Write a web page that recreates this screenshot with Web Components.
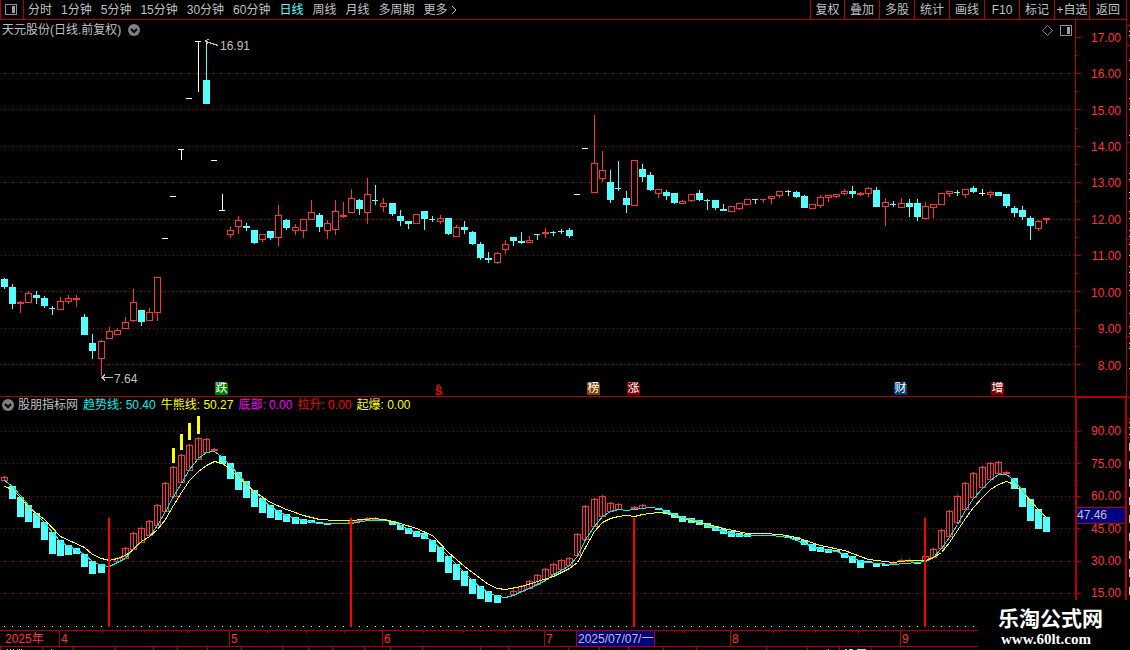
<!DOCTYPE html>
<html lang="zh-CN">
<head>
<meta charset="utf-8">
<meta name="viewport" content="width=device-width, initial-scale=1">
<title>天元股份 日线</title>
<style>
html { height: 100%; background: #000; }
body {
  margin: 0; height: 100%; overflow: hidden; background: #000; color: #c0c0c0;
  font: 12px/16px "Liberation Sans", "Noto Sans CJK SC", sans-serif;
  --rule: #b00000; --up: #ff3232; --down: #54ffff; --mark: #000080;
}
</style>
</head>
<body>
<stock-terminal></stock-terminal>
<script>
const RULE = '#b00000', UP = '#ff3232', DOWN = '#54ffff';
const rect = (x, y, w, h, c) => `<rect x="${x}" y="${y}" width="${w}" height="${h}" fill="${c}"/>`;
const barX = i => 4 + 8 * i + Math.floor((i + 0.65) / 12.15);
const box = (x, t, b, c, inner) => {
  if (b - t < 3) return rect(x - 3, t, 7, b - t, c);
  return (inner ? rect(x - 2, t + 1, 5, b - t - 2, inner) : '') +
    rect(x - 3, t, 7, 1, c) + rect(x - 3, b - 1, 7, 1, c) + rect(x - 3, t, 1, b - t, c) + rect(x + 3, t, 1, b - t, c);
};
const grid = (rows, w) => rows.map(y =>
  `<line x1="1" x2="${w}" y1="${y + 0.5}" y2="${y + 0.5}" stroke="${RULE}" stroke-dasharray="1 3"/>`).join('');
const svg = (x, y, w, h, inner) =>
  `<svg viewBox="${x} ${y} ${w} ${h}" preserveAspectRatio="none" shape-rendering="crispEdges" aria-hidden="true">${inner}</svg>`;
const define = (name, render) => customElements.define(name, class extends HTMLElement {
  constructor() { super(); this.attachShadow({ mode: 'open' }); }
  connectedCallback() { this.shadowRoot.innerHTML = render(this); }
});
const layer = 'svg{position:absolute;inset:0;width:100%;height:100%;display:block}';

/* kind, body top, body bottom, high, low; d = down, u = up, f = flat up, w = unchanged */
const candles = `d279 287 278 289|d287 304 284 309|f302 304 301 313|u293 303 291 303|d295 298 291 304|d298 306 296 308|d308 309 306 315|u301 310 297 310|u298 302 295 304|f298 300 295 307|d317 335 314 335|d343 351 334 359|u341 359 340 376|u331 339 327 339|u330 335 328 335|u322 329 317 329|u302 321 289 322|d310 322 310 326|u312 321 308 321|u277 313 277 321|w238 239 238 239|w196 197 196 197|w149 150 149 160|w98 99 98 99|w41 42 41 92|d80 104 40 104|w160 161 160 161|w210 211 194 211|u230 235 227 238|u220 227 216 234|d226 228 223 231|d230 243 230 244|u234 240 234 242|d231 238 231 240|u215 238 205 246|d220 228 219 230|u227 231 224 235|u219 231 219 238|u212 220 200 220|d215 227 213 232|u223 231 220 239|u211 230 200 235|f215 217 202 218|u198 213 189 213|d200 209 199 215|u194 213 178 224|d200 201 185 205|u203 207 198 212|d203 214 203 216|d216 221 210 226|d221 224 221 229|u214 224 214 224|d211 219 211 230|d219 220 216 222|u218 222 215 224|d218 234 218 235|u227 237 225 237|d227 230 221 234|d232 244 231 245|d244 258 242 260|d258 260 252 263|u253 263 252 264|u244 250 240 254|d237 241 237 246|d241 243 232 244|u240 243 236 243|d234 235 234 240|f232 234 228 238|d232 233 231 236|d231 232 229 234|d230 236 228 238|w194 195 194 195|w148 149 148 149|u163 193 115 193|u170 179 151 182|d182 200 170 203|d188 189 161 191|d198 205 191 213|u160 206 160 206|d169 177 164 182|d175 190 172 191|u189 194 189 198|d192 196 190 200|d193 203 193 204|u201 204 200 204|u194 201 194 202|d193 200 190 201|d200 201 199 210|d200 208 200 210|d209 211 204 211|u206 212 206 212|u203 209 203 210|u199 205 199 205|d199 200 199 204|f199 200 199 203|u196 199 196 204|u191 196 191 198|d191 192 190 196|d192 197 191 198|d196 208 195 208|u204 209 204 209|u197 206 195 208|u195 198 195 202|u194 197 194 198|u191 194 189 195|d191 194 186 198|f193 195 192 196|u188 194 187 197|d190 207 187 207|u202 207 198 226|d204 205 201 207|u203 208 198 208|d203 207 199 217|d203 217 199 221|u206 219 202 219|u204 208 204 218|u193 205 193 205|u191 194 191 197|d192 193 190 196|u189 195 189 198|d188 192 186 193|w193 194 189 196|u192 195 191 198|d192 196 192 196|d194 206 194 208|d208 213 206 217|d210 217 206 220|d218 226 216 240|u221 229 220 231|f218 220 218 224`;
const drawCandles = () => candles.split('|').map((s, i) => {
  const k = s[0], [t, b, hi, lo] = s.slice(1).split(' ').map(Number), x = barX(i);
  const c = k === 'd' ? DOWN : k === 'w' ? '#fff' : UP;
  const wick = rect(x, hi, 1, lo - hi, c);
  if (k === 'u') return wick + box(x, t, b, c, '#000');
  const w = b - t === 1 ? 6 : 7;
  return wick + rect(x - 3, t, w, b - t, c);
}).join('');

/* bar index, top, bottom of each momentum block */
const downBlocks = '1 486 499,2 497 517,3 505 522,4 513 528,5 522 540,6 532 554,7 540 556,8 545 555,9 548 554,10 554 567,11 561 574,12 564 573,27 456 464,28 463 479,29 472 490,30 481 498,31 490 507,32 498 513,33 505 518,34 510 520,35 514 522,36 517 524,37 519 524,38 520 523,39 522 524,40 523 525,47 519 521,48 521 525,49 525 530,50 528 534,51 531 537,52 533 539,53 540 552,54 547 562,55 556 573,56 564 580,57 571 586,58 579 594,59 586 599,60 591 602,61 595 603,81 508 510,82 510 514,83 513 518,84 516 522,85 518 523,86 520 525,87 523 528,88 526 531,89 529 534,90 531 537,91 533 537,92 534 537,97 536 538,98 537 540,99 540 545,100 544 551,101 547 552,102 549 553,103 550 552,104 553 558,105 556 563,106 560 568,107 561 563,108 563 567,109 564 566,113 562 564,125 478 489,126 488 507,127 499 521,128 509 529,129 517 532';
const upBlocks = '0 477 481,14 558 562,15 548 559,16 533 550,17 528 543,18 521 536,19 505 526,20 483 512,21 467 497,22 455 483,23 445 471,24 438 460,25 439 453,26 449 451,43 520 523,44 520 522,45 518 520,46 518 520,63 591 595,64 586 592,65 581 589,66 575 585,67 569 580,68 564 575,69 560 570,70 558 566,71 534 556,72 506 540,73 499 527,74 496 517,75 503 512,76 504 510,78 507 509,79 505 509,110 562 564,111 560 562,112 560 562,114 556 561,115 549 558,116 530 549,117 511 537,118 496 523,119 483 510,120 473 498,121 467 488,122 463 480,123 462 474,124 472 474';
const trend = '4,480 12,486 20,495 28,505 36,514 44,522 52,532 60,541 68,546 76,549 84,554 92,561 101,565 109,566 117,562 125,558 133,548 141,541 149,536 157,525 165,511 173,496 181,483 189,469 198,458 206,452 214,451 222,457 230,465 238,474 246,483 254,491 262,499 270,506 278,511 286,515 295,518 303,520 319,523 335,523 351,523 367,520 383,520 392,521 400,525 408,529 416,532 424,535 432,541 440,548 448,556 456,564 464,572 472,580 480,587 488,592 497,596 505,597 513,595 521,591 529,588 537,584 545,580 553,574 561,570 569,565 577,556 585,539 594,526 602,516 610,511 618,509 626,510 634,509 642,508 650,507 658,508 666,511 674,514 682,517 691,519 699,521 707,525 715,528 723,531 739,535 755,535 771,535 788,537 804,543 820,549 836,551 844,554 852,557 860,561 876,563 893,564 917,562 925,561 933,557 941,548 949,537 957,524 965,510 973,498 982,488 990,480 998,474 1006,474 1014,480 1022,490 1030,500 1038,509 1046,518';
const slow = '4,486 12,489 20,497 28,507 44,519 60,536 84,547 92,554 101,558 109,560 117,558 125,555 133,549 141,541 149,536 157,529 165,519 173,505 181,492 189,480 198,471 206,465 214,461 222,463 230,469 238,477 254,491 270,502 286,509 303,515 319,519 335,520 351,520 375,518 388,520 400,523 416,528 432,535 448,552 464,566 480,578 488,584 497,588 505,589 521,586 537,581 553,576 569,568 577,562 585,547 594,531 602,522 610,518 618,516 626,515 634,516 642,514 658,512 666,513 682,518 699,522 723,528 747,533 763,533 780,534 796,537 820,545 844,550 868,559 893,562 909,560 925,560 933,557 941,552 949,542 957,530 965,518 973,507 982,497 990,489 998,484 1006,481 1014,484 1022,492 1038,509 1046,517';
const curve = (pts, c) => `<polyline transform="translate(.5 .5)" fill="none" stroke="${c}" points="${pts}"/>`;
const drawMomentum = () => {
  const split = s => s.split(',').map(r => r.split(' ').map(Number));
  return split(downBlocks).map(([i, t, b]) => rect(barX(i) - 3, t, 7, b - t, DOWN)).join('') +
    split(upBlocks).map(([i, t, b]) => rect(barX(i), t - 1, 1, b - t + 1, UP) + box(barX(i), t, b, UP)).join('') +
    curve(trend, '#00f0f0') + curve(slow, '#ffff00') +
    [[21, 448, 463], [22, 434, 450], [23, 423, 440], [24, 416, 434]].map(([i, t, b]) => rect(barX(i) - 1, t, 3, b - t, '#ffff00')).join('') +
    Array.from({ length: 121 }, (_, i) => rect(barX(i), 626, 1, 1, '#ffff54')).join('') +
    [108, 350, 633, 924].map(x => rect(x, 518, 2, 109, '#ff0000')).join('');
};

define('chevron-disc', () => `<style>:host{display:block;width:12px;height:12px}svg{display:block}</style>
<svg width="12" height="12" viewBox="0 0 12 12" aria-hidden="true"><circle cx="6" cy="6" r="6" fill="#808080"/><path d="M3 5l3 3 3-3" fill="none" stroke="#000" stroke-width="2"/></svg>`);

define('pane-icon', () => `<style>:host{display:block;width:13px;height:11px}svg{display:block}</style>
<svg width="13" height="11" viewBox="0 0 13 11" shape-rendering="crispEdges" aria-hidden="true"><rect x=".5" y=".5" width="11" height="10" rx="1" fill="none" stroke="#909090"/><rect x="7" y="2" width="3" height="7" fill="#a0a0a0"/></svg>`);

define('period-toolbar', () => `<style>
:host{display:flex;justify-content:space-between;box-sizing:border-box;height:20px;border-bottom:1px solid var(--rule);border-left:1px solid var(--rule);margin-right:3px}
button{font:inherit;color:inherit;background:none;border:0;padding:0;margin:0;white-space:nowrap;cursor:pointer}
nav{display:flex;gap:9px}
.layout{width:23px;box-sizing:border-box;border-right:1px solid var(--rule);display:grid;place-items:center;margin-right:-5px;padding-right:2px}
.active{color:var(--down)}
.more{display:flex;align-items:center;gap:3px}
.actions{gap:0;border-right:1px solid var(--rule)}
.actions button{width:35px;box-sizing:border-box;border-left:1px solid var(--rule)}
.actions button:first-child{width:34px}
.actions button:last-child{width:37px}
</style>
<nav aria-label="周期"><button class="layout" aria-label="布局"><pane-icon></pane-icon></button>
${['分时', '1分钟', '5分钟', '15分钟', '30分钟', '60分钟', '日线', '周线', '月线', '多周期'].map(t => `<button${t === '日线' ? ' class="active"' : ''}>${t}</button>`).join('')}
<button class="more">更多<svg width="6" height="10" viewBox="0 0 6 10" aria-hidden="true"><path d="M1 1l4 4-4 4" fill="none" stroke="#c0c0c0"/></svg></button></nav>
<nav class="actions" aria-label="操作">${['复权', '叠加', '多股', '统计', '画线', 'F10', '标记', '+自选', '返回'].map(t => `<button>${t}</button>`).join('')}</nav>`);

define('event-badge', () => `<style>:host{position:absolute;width:13px;height:13px;color:#fff;line-height:13px;text-align:center;clip-path:polygon(0 0,11px 0,13px 2px,13px 13px,0 13px)}</style><slot></slot>`);

define('price-pane', () => {
  const at = (x, y) => `left:calc(100% * ${x} / 1075);top:calc(100% * ${y - 20} / 377)`;
  return `<style>
:host{display:block;position:relative;min-width:0;min-height:0}
${layer}
header{position:relative;display:flex;justify-content:space-between;align-items:center;height:20px;padding:0 2px}
.title{display:flex;align-items:center;gap:7px;white-space:nowrap}
.tools{display:flex;align-items:center;gap:7px}
.tools svg,.tools pane-icon{position:static;width:auto;height:auto}
h1{font:inherit;margin:0}
.tag{position:absolute;line-height:12px}
.signal{position:absolute;color:#ff0000;font-weight:bold;font-size:11px;line-height:9px}
</style>
${svg(0, 20, 1075, 377, grid([73, 109, 146, 182, 219, 255, 291, 328, 364], 1075) + drawCandles() + rect(0, 396, 1075, 1, RULE) +
  `<path d="M205 41l4-2M205 41l3 3M206 41.500l12 4M102 377.500h11M105 374.500l-3 3 3 3" fill="none" stroke="#c0c0c0"/>` +
  `<path d="M435.500 387.500l3-3 3 3" fill="none" stroke="#ff0000"/>`)}
<header><div class="title"><h1>天元股份(日线.前复权)</h1><chevron-disc></chevron-disc></div>
<div class="tools"><svg width="11" height="11" viewBox="0 0 11 11" aria-hidden="true"><path d="M5.500.5l5 5-5 5-5-5z" fill="none" stroke="#808080"/></svg><pane-icon></pane-icon></div></header>
<span class="tag" style="${at(220, 40)}">16.91</span><span class="tag" style="${at(114, 373)}">7.64</span>
<span class="signal" style="${at(435, 387)}">S</span>
${[['跌', 215, '#008000'], ['榜', 587, '#804000'], ['涨', 627, '#800000'], ['财', 894, '#003c78'], ['增', 991, '#800000']]
  .map(([t, x, c]) => `<event-badge style="${at(x, 382)};background:${c}">${t}</event-badge>`).join('')}`;
});

define('momentum-pane', () => `<style>
:host{display:block;position:relative;min-width:0;min-height:0}
${layer}
header{position:relative;display:flex;align-items:center;gap:5px;height:16px;padding-left:2px;white-space:nowrap}
header chevron-disc{margin-right:-1px}
</style>
${svg(0, 397, 1075, 233, grid([431, 463, 496, 528, 561, 593], 1075) + drawMomentum())}
<header><chevron-disc></chevron-disc><span>股朋指标网</span><span style="color:#00f0f0">趋势线: 50.40</span><span style="color:#ffff00">牛熊线: 50.27</span><span style="color:#ff00ff">底部: 0.00</span><span style="color:#ff0000">拉升: 0.00</span><span style="color:#ffff00">起爆: 0.00</span></header>`);

define('value-axis', el => {
  const upper = el.getAttribute('kind') === 'price';
  const labels = upper ? ['17.00', '16.00', '15.00', '14.00', '13.00', '12.00', '11.00', '10.00', '9.00', '8.00'] : ['90.00', '75.00', '60.00', '45.00', '30.00', '15.00'];
  const art = upper
    ? svg(1075, 20, 52, 377, rect(1075, 20, 1, 377, RULE) + rect(1126, 20, 1, 377, RULE) + rect(1075, 396, 52, 1, RULE) +
      [37, 73, 109, 146, 182, 219, 255, 291, 328, 364].map(y => rect(1076, y, 5, 1, RULE)).join('') +
      [55, 91, 128, 164, 201, 237, 273, 310, 346].map(y => rect(1076, y, 2, 1, RULE)).join(''))
    : svg(1075, 397, 52, 233, rect(1075, 397, 52, 1, RULE) + rect(1075, 397, 2, 233, RULE) + rect(1125, 397, 2, 233, RULE) +
      [431, 463, 496, 528, 561, 593].map(y => rect(1077, y, 4, 1, RULE)).join('') +
      [447, 480, 512, 545, 577].map(y => rect(1077, y, 1, 1, RULE)).join(''));
  return `<style>
:host{display:flex;flex-direction:column;position:relative;min-height:0;color:var(--up)}
${layer}
.v{position:relative;box-sizing:border-box;display:flex;align-items:center;justify-content:flex-end;padding-right:6px;min-height:0;flex:${upper ? 14 : 9} 1 0}
.upper{padding-bottom:1px}
.lower{padding-top:1px}
.a{flex:5 1 0}.b{flex:6 1 0}
output{position:absolute;left:2px;right:2px;top:calc(100% * 110 / 233);line-height:15px;background:var(--mark);color:#c0c0c0;border:solid var(--rule);border-width:1px 0}
</style>${art}${upper ? '' : '<div class="a"></div>'}${labels.map(t => `<div class="v ${upper ? 'upper' : 'lower'}">${t}</div>`).join('')}
<div class="${upper ? 'a' : 'b'}"></div>${upper ? '' : '<output>47.46</output>'}`;
});

define('side-strip', () => `<style>:host{display:block;position:relative;min-height:0}${layer}</style>
${svg(1127, 0, 3, 630, [25, 45, 142, 239, 336, 397, 418, 437].map(y => rect(1127, y, 3, 1, RULE)).join('') +
  [31, 35, 60, 79, 98, 109, 135, 173, 179, 192, 198, 211, 218, 230, 236, 244, 255, 266, 272, 285, 290, 313, 326, 333, 343, 348, 368, 422, 427, 434].map(y => rect(1129, y, 1, 1, '#c0c0c0')).join('') +
  Array.from({ length: 9 }, (_, i) => rect(1129, 443 + 18 * i, 1, 8, '#c0c0c0')).join(''))}`);

define('time-axis', () => `<style>
:host{display:grid;position:relative;grid-template-columns:59fr 170fr 153fr 162fr 32fr 78fr 76fr 170fr 230fr;height:20px;box-sizing:border-box;color:var(--up)}
${layer}
span{position:relative;box-sizing:border-box;height:17px;border:solid var(--rule);border-width:1px 0 1px 1px;padding-left:1px;line-height:16px;white-space:nowrap;min-width:0}
span:first-of-type{border-left:0;padding-left:5px}
.cursor{background:var(--mark);color:#c0c0c0}
</style>
<span>2025年</span><span>4</span><span>5</span><span>6</span><span>7</span><span class="cursor">2025/07/07/一</span><span></span><span>8</span><span>9</span>
${svg(0, 630, 1130, 20, [102, 144, 187, 267, 306, 344, 423, 463, 504, 684, 773, 815, 858].map(x => rect(x, 631, 1, 2, RULE)).join('') +
  [0, 42, 73, 115, 153, 177, 207, 241, 282, 308, 332, 364, 390, 422, 480, 508, 568, 599, 628, 663, 696, 766, 807, 839, 871].map(x => rect(x, 647, 1, 3, RULE)).join('') +
  [7, 10, 13, 17, 19, 21, 51, 828].map(x => rect(x, 649, 1, 1, '#c0c0c0')).join('') + rect(845, 649, 2, 1, DOWN) + rect(849, 649, 4, 1, DOWN) + rect(857, 649, 9, 1, DOWN))}`);

define('site-mark', () => `<style>
:host{position:absolute;right:0;bottom:0;width:152px;height:50px;box-sizing:border-box;padding:6px 0 0 20px;background:#000;color:#fff}
strong{display:block;font:bold 21px/25px "Liberation Sans","Noto Sans CJK SC",sans-serif}
a{display:block;color:inherit;text-decoration:none;font:bold 15px/17px "Liberation Serif",serif;padding-left:3px}
</style><strong>乐淘公式网</strong><a href="#">www.60lt.com</a>`);

define('stock-terminal', () => `<style>
:host{display:grid;position:relative;height:100%;grid-template-columns:minmax(0,1fr) 52px 3px;grid-template-rows:20px minmax(0,377fr) minmax(0,233fr) 20px}
period-toolbar,time-axis{grid-column:1/-1}
period-toolbar{grid-row:1}
price-pane,.price{grid-row:2}
momentum-pane,.momentum{grid-row:3}
price-pane,momentum-pane{grid-column:1}
value-axis{grid-column:2}
side-strip{grid-column:3;grid-row:1/4}
time-axis{grid-row:4}
</style>
<period-toolbar></period-toolbar><price-pane></price-pane><value-axis class="price" kind="price"></value-axis>
<momentum-pane></momentum-pane><value-axis class="momentum" kind="momentum"></value-axis>
<side-strip></side-strip><time-axis></time-axis><site-mark></site-mark>`);
</script>
</body>
</html>
